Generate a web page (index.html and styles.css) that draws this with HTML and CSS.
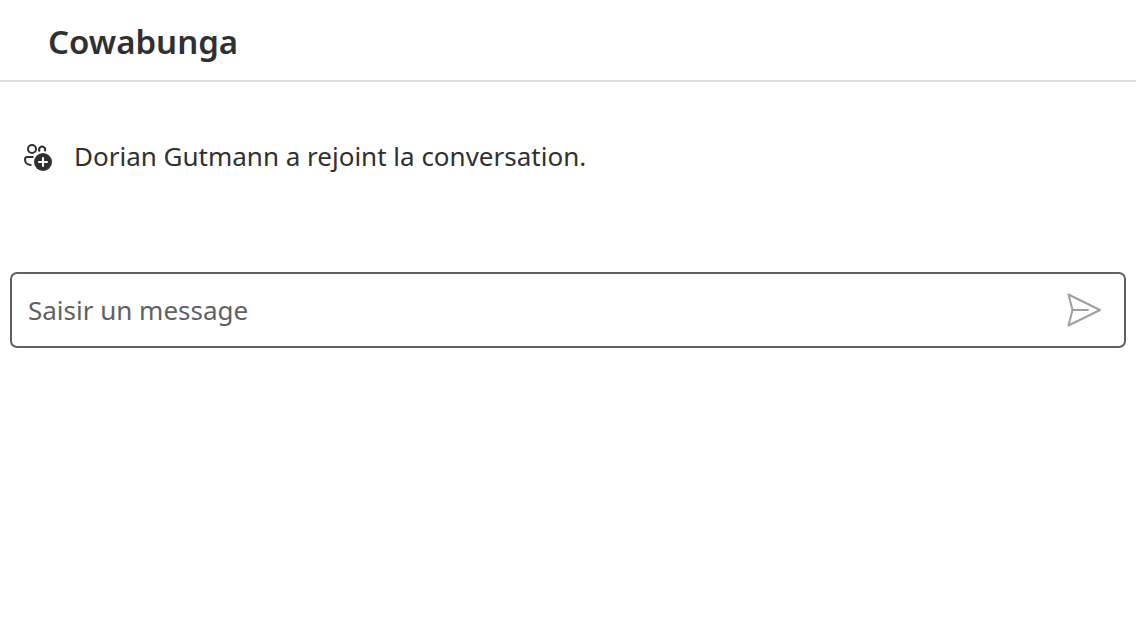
FILE: index.html
```html
<!DOCTYPE html>
<html lang="fr">
<head>
<meta charset="utf-8">
<meta name="viewport" content="width=device-width, initial-scale=1">
<title>Cowabunga</title>
<link rel="stylesheet" href="styles.css">
</head>
<body>
<header class="header"><h1 class="title">Cowabunga</h1></header>
<main>
  <div class="event">
    <svg class="event-icon" viewBox="0 0 32 32" aria-hidden="true">
      <g fill="none" stroke="#303030" stroke-width="2">
        <circle cx="10" cy="9" r="4"/>
        <path d="M17.8 11.5A3 3 0 1 1 22.6 11.3M11.5 17H5Q3 17 3 19.5C3 23 5 25 9.5 25"/>
      </g>
      <circle cx="21" cy="22" r="9" fill="#303030"/>
      <path d="M21 18v8M17 22h8" stroke="#fff" stroke-width="2" stroke-linecap="round"/>
    </svg>
    <p class="event-text">Dorian Gutmann a rejoint la conversation.</p>
  </div>
  <form class="composer">
    <input class="field" type="text" aria-label="Saisir un message" placeholder="Saisir un message">
    <button class="send" type="button" aria-label="Envoyer">
      <svg class="send-icon" viewBox="0 0 40 40" aria-hidden="true"><path d="M4.5 4.5L36 20 4.5 35.5 8.5 20zM8.5 20H24" fill="none" stroke="#a19f9d" stroke-width="2" stroke-linejoin="round" stroke-linecap="round"/></svg>
    </button>
  </form>
</main>
</body>
</html>
```
FILE: styles.css
```css
* { box-sizing: border-box; }
body { margin: 0; background: #fff; color: #303030; font-family: "Noto Sans", "Open Sans", sans-serif; }
.header { padding: 18px 48px 14px; border-bottom: 2px solid #dcdcdc; }
.title { margin: 0; font-size: 33px; line-height: 48px; font-weight: 600; }
.event { display: flex; align-items: center; gap: 20px; padding: 56px 22px 98px; }
.event-icon { flex: none; width: 32px; height: 32px; }
.event-text { margin: 0; font-size: 26px; line-height: 36px; }
.composer { display: flex; align-items: center; height: 76px; margin: 0 10px; padding: 0 20px 0 16px; border: 2px solid #616161; border-radius: 7px; }
.field { flex: 1; min-width: 0; padding: 0; border: 0; outline: 0; background: none; color: #303030; font: inherit; font-size: 26px; }
.field::placeholder { color: #616161; opacity: 1; }
.send { display: flex; padding: 0; border: 0; background: none; }
.send-icon { width: 40px; height: 40px; }
```
